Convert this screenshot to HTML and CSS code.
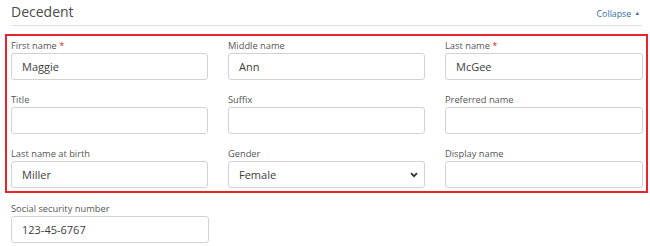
FILE: index.html
```html
<!DOCTYPE html>
<html>
<head>
<meta charset="utf-8">
<link rel="stylesheet" href="styles.css">
</head>
<body>
<div class="panel">
  <div class="panel-header">
    <h2 class="panel-title">Decedent</h2>
    <a class="collapse" href="#">Collapse <span class="caret">&#9650;</span></a>
  </div>
  <div class="highlight">
    <div class="grid">
      <div class="field">
        <label class="label">First name <span class="req">*</span></label>
        <input class="input" type="text" value="Maggie">
      </div>
      <div class="field">
        <label class="label">Middle name</label>
        <input class="input" type="text" value="Ann">
      </div>
      <div class="field">
        <label class="label">Last name <span class="req">*</span></label>
        <input class="input" type="text" value="McGee">
      </div>
      <div class="field">
        <label class="label">Title</label>
        <input class="input" type="text" value="">
      </div>
      <div class="field">
        <label class="label">Suffix</label>
        <input class="input" type="text" value="">
      </div>
      <div class="field">
        <label class="label">Preferred name</label>
        <input class="input" type="text" value="">
      </div>
      <div class="field">
        <label class="label">Last name at birth</label>
        <input class="input" type="text" value="Miller">
      </div>
      <div class="field">
        <label class="label">Gender</label>
        <div class="select-wrap">
          <select class="input select">
            <option>Female</option>
          </select>
          <svg class="chevron" width="8" height="6" viewBox="0 0 8 6"><path d="M1 1.2 L4 4.2 L7 1.2" fill="none" stroke="#333" stroke-width="1.8"/></svg>
        </div>
      </div>
      <div class="field">
        <label class="label">Display name</label>
        <input class="input" type="text" value="">
      </div>
    </div>
  </div>
  <div class="extra">
    <div class="field">
      <label class="label">Social security number</label>
      <input class="input" type="text" value="123-45-6767">
    </div>
  </div>
</div>
</body>
</html>
```
FILE: styles.css
```css
html, body {
  margin: 0;
  padding: 0;
  background: #fff;
}
body {
  font-family: "Open Sans", "Liberation Sans", sans-serif;
  color: #444;
}
.panel {
  width: 650px;
}
.panel-header {
  display: flex;
  align-items: flex-end;
  justify-content: space-between;
  margin: 0 8px 0 11px;
  border-bottom: 1px solid #e2e2e2;
  box-sizing: border-box;
  height: 26px;
}
.panel-title {
  margin: 0;
  font-size: 14px;
  font-weight: 400;
  color: #4a4a4a;
  line-height: 19px;
  padding-bottom: 4px;
}
.collapse {
  font-size: 8.8px;
  color: #2f6ea6;
  text-decoration: none;
  line-height: 12px;
  padding-bottom: 5px;
  padding-right: 2px;
}
.caret {
  font-size: 5.5px;
  vertical-align: 2px;
  margin-left: 1px;
}
.highlight {
  margin: 8px 0 0 5px;
  width: 643px;
  box-sizing: border-box;
  border: 2px solid #e8232a;
  padding: 2px 3px 3px 4px;
}
.grid {
  display: grid;
  grid-template-columns: 197px 197px 198px;
  column-gap: 20px;
  row-gap: 12px;
}
.field {
  display: flex;
  flex-direction: column;
}
.label {
  font-size: 9.3px;
  line-height: 15px;
  color: #555;
}
.req {
  color: #c9302c;
}
.input {
  height: 27px;
  box-sizing: border-box;
  border: 1px solid #d2d2d2;
  border-radius: 3px;
  padding: 0 10px;
  font-family: "Open Sans", "Liberation Sans", sans-serif;
  font-size: 11px;
  color: #3d3d3d;
  background: #fff;
  width: 100%;
  margin: 0;
  outline: none;
}
.select-wrap {
  position: relative;
}
.select {
  -webkit-appearance: none;
  appearance: none;
}
.chevron {
  position: absolute;
  right: 7px;
  top: 11px;
}
.extra {
  margin: 8px 0 0 11px;
  width: 198px;
}
```
